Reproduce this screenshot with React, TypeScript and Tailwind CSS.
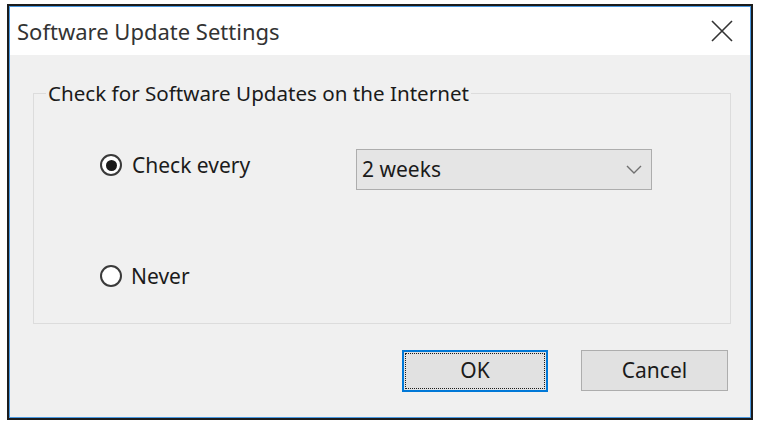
import React from "react";

const font = { fontFamily: '"Noto Sans", "Open Sans", Arial, sans-serif' };

const Radio = ({ checked }: { checked?: boolean }) => (
  <span className="flex h-[22px] w-[22px] shrink-0 items-center justify-center rounded-full border-2 border-[#3a3a3a] bg-white">
    {checked && <span className="h-[11px] w-[11px] rounded-full bg-[#1a1a1a]" />}
  </span>
);

export default function App() {
  return (
    <div className="min-h-screen bg-white pl-[7px] pt-[4px]" style={font}>
      <div className="h-[416px] w-[746px] border-2 border-[#1c1c1c]">
        <div className="flex h-full flex-col border border-[#4a98e0] bg-[#f0f0f0]">
          {/* title bar */}
          <div className="flex h-[48px] items-center justify-between bg-white pl-[7px] pr-[16px]">
            <span className="text-[22px] text-[#333333]">Software Update Settings</span>
            <svg width="24" height="22" viewBox="0 0 24 22" className="text-[#333333]">
              <path d="M2 1 L22 21 M22 1 L2 21" stroke="currentColor" strokeWidth="1.6" fill="none" />
            </svg>
          </div>

          <div className="flex flex-1 flex-col pl-[23px] pr-[19px] pt-[25px]">
            <fieldset className="h-[244px] border border-[#dcdcdc]">
              <legend className="ml-[12px] px-[2px] text-[20.6px] leading-[26px] text-[#1b1b1b]">
                Check for Software Updates on the Internet
              </legend>
              <div className="pl-[66px]">
                <div className="mt-[43px] flex items-start">
                  <label className="mt-[4px] flex w-[256px] items-center gap-[10px] text-[21px] leading-[24px] text-[#1b1b1b]">
                    <Radio checked />
                    Check every
                  </label>
                  <div className="flex h-[41px] w-[296px] items-center justify-between border border-[#adadad] bg-[#e5e5e5] pl-[5px] pr-[9px] text-[21px] text-[#1b1b1b]">
                    <span>2 weeks</span>
                    <svg width="16" height="9" viewBox="0 0 16 9">
                      <path d="M1 1 L8 8 L15 1" stroke="#707070" strokeWidth="1.4" fill="none" />
                    </svg>
                  </div>
                </div>
                <label className="mt-[74px] flex items-center gap-[9px] text-[21px] leading-[24px] text-[#1b1b1b]">
                  <Radio />
                  Never
                </label>
              </div>
            </fieldset>

            <div className="mt-[26px] flex justify-end gap-[33px] pr-[3px]">
              <button className="h-[42px] w-[146px] border-2 border-[#0078d7] bg-[#e1e1e1] p-[1px] text-[21px] text-[#1b1b1b]">
                <span className="flex h-full w-full items-center justify-center border border-dotted border-[#1b1b1b]">
                  OK
                </span>
              </button>
              <button className="h-[41px] w-[147px] border border-[#adadad] bg-[#e1e1e1] text-[21px] text-[#1b1b1b]">
                Cancel
              </button>
            </div>
          </div>
        </div>
      </div>
    </div>
  );
}
